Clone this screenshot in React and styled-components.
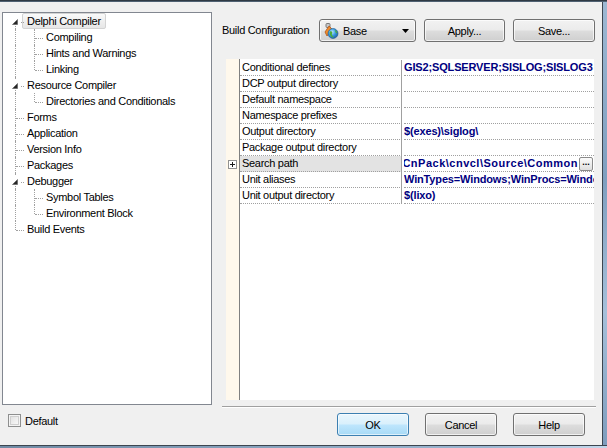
import React from 'react';
import styled, { createGlobalStyle, css } from 'styled-components';

const GlobalStyle = createGlobalStyle`
  html, body {
    margin: 0;
    padding: 0;
    background: #f0f0f0;
  }
  body {
    font-family: "Liberation Sans", Arial, sans-serif;
    font-size: 11px;
    color: #000;
  }
`;

const treeItems = [
  { label: 'Delphi Compiler', guides: ['expFirst'], selected: true },
  { label: 'Compiling', guides: ['pass', 'branch'] },
  { label: 'Hints and Warnings', guides: ['pass', 'branch'] },
  { label: 'Linking', guides: ['pass', 'last'] },
  { label: 'Resource Compiler', guides: ['exp'] },
  { label: 'Directories and Conditionals', guides: ['pass', 'last'] },
  { label: 'Forms', guides: ['branch'] },
  { label: 'Application', guides: ['branch'] },
  { label: 'Version Info', guides: ['branch'] },
  { label: 'Packages', guides: ['branch'] },
  { label: 'Debugger', guides: ['exp'] },
  { label: 'Symbol Tables', guides: ['pass', 'branch'] },
  { label: 'Environment Block', guides: ['pass', 'last'] },
  { label: 'Build Events', guides: ['last'] },
];

const options = [
  { name: 'Conditional defines', value: 'GIS2;SQLSERVER;SISLOG;SISLOG3' },
  { name: 'DCP output directory', value: '' },
  { name: 'Default namespace', value: '' },
  { name: 'Namespace prefixes', value: '' },
  { name: 'Output directory', value: '$(exes)\\siglog\\' },
  { name: 'Package output directory', value: '' },
  {
    name: 'Search path',
    value: '..\\Componentes\\CnPack\\cnvcl\\Source\\Common',
    expandable: true,
    active: true,
  },
  { name: 'Unit aliases', value: 'WinTypes=Windows;WinProcs=Windows;DbiTypes=BDE' },
  { name: 'Unit output directory', value: '$(lixo)' },
];

const Window = styled.div`
  width: 607px;
  height: 448px;
  display: flex;
  flex-direction: column;
  overflow: hidden;
`;

const TopFrame = styled.div`
  height: 2px;
  flex: none;
  background: linear-gradient(#1f262d, #5f7589);
`;

const Middle = styled.div`
  flex: 1;
  display: flex;
  min-height: 0;
`;

const SideFrame = styled.div`
  width: 4px;
  flex: none;
  border-left: 1px solid #3d4650;
  background: linear-gradient(#9db8d3, #7f9fbf 40%, #a6c0da 70%, #7e9dbd);
`;

const BottomFrame = styled.div`
  height: 2px;
  flex: none;
  border-top: 1px solid #3d4650;
  background: linear-gradient(to right, #6f8aa4, #9cb7d2 80%, #c4d8ec);
`;

const Content = styled.div`
  flex: 1;
  display: flex;
  flex-direction: column;
  padding: 10px 0 0 2px;
  background: #f0f0f0;
`;

const Main = styled.div`
  display: flex;
  height: 396px;
  flex: none;
`;

const Tree = styled.div`
  width: 208px;
  height: 391px;
  border: 1px solid #828790;
  background: #fff;
  flex: none;
`;

const TreeRow = styled.div`
  display: flex;
  align-items: center;
  height: 16px;
  padding-left: 2px;
  white-space: nowrap;
`;

const lineColor = '#a0a0a0';

const Guide = styled.span`
  position: relative;
  width: 19px;
  height: 16px;
  flex: none;

  &::before {
    content: '';
    position: absolute;
    left: 10px;
    border-left: 1px dotted ${lineColor};
    ${({ $kind }) =>
      $kind === 'pass' || $kind === 'branch'
        ? css`top: 0; bottom: 0;`
        : $kind === 'last'
        ? css`top: 0; height: 9px;`
        : $kind === 'expFirst'
        ? css`top: 13px; bottom: 0;`
        : $kind === 'exp'
        ? css`top: 0; bottom: 0; clip-path: polygon(0 0, 100% 0, 100% 3px, 0 3px, 0 13px, 100% 13px, 100% 100%, 0 100%);`
        : css`display: none;`}
  }

  &::after {
    content: '';
    position: absolute;
    top: 9px;
    border-top: 1px dotted ${lineColor};
    ${({ $kind }) =>
      $kind === 'branch' || $kind === 'last'
        ? css`left: 11px; width: 8px;`
        : $kind === 'exp' || $kind === 'expFirst'
        ? css`left: 16px; width: 3px;`
        : css`display: none;`}
  }
`;

const Triangle = styled.svg`
  position: absolute;
  left: 7px;
  top: 6px;
  width: 6px;
  height: 6px;
`;

const TreeLabel = styled.span`
  height: 14px;
  line-height: 14px;
  padding: 0 3px;
  margin-left: ${({ $selected }) => ($selected ? '-2px' : '0')};
  letter-spacing: -0.3px;
  ${({ $selected }) =>
    $selected &&
    css`
      padding: 0 4px 0 4px;
      border: 1px solid #d3d3d3;
      border-radius: 2px;
      background: linear-gradient(#fafafa, #e6e6e6);
    `}
`;

const RightPanel = styled.div`
  width: 374px;
  margin-left: 10px;
  display: flex;
  flex-direction: column;
`;

const Toolbar = styled.div`
  display: flex;
  align-items: center;
  margin-top: 7px;
  height: 23px;
`;

const ToolLabel = styled.span`
  width: 97px;
  flex: none;
  letter-spacing: -0.3px;
  margin-top: -1px;
`;

const buttonFace = css`
  border: 1px solid #707070;
  border-radius: 3px;
  background: linear-gradient(#f2f2f2 0%, #ebebeb 48%, #dddddd 52%, #cfcfcf 100%);
  box-shadow: inset 0 0 0 1px rgba(255, 255, 255, 0.7);
`;

const Combo = styled.div`
  ${buttonFace};
  box-sizing: border-box;
  width: 97px;
  height: 23px;
  display: flex;
  align-items: center;
  padding: 0 6px 0 3px;
  gap: 4px;
  flex: none;
`;

const ComboText = styled.span`
  flex: 1;
  letter-spacing: -0.3px;
`;

const Button = styled.button`
  ${buttonFace};
  box-sizing: border-box;
  width: ${({ $w }) => $w || 72}px;
  height: 23px;
  margin-left: ${({ $gap }) => ($gap == null ? 0 : $gap)}px;
  font-family: inherit;
  font-size: 11px;
  color: #000;
  letter-spacing: -0.3px;
  padding: 0;
  flex: none;
  ${({ $default }) =>
    $default &&
    css`
      border-color: #3c7fb1;
      background: linear-gradient(#eaf6fd 0%, #d9f0fc 48%, #bee6fd 52%, #a7d9f5 100%);
      box-shadow: inset 0 0 0 1px rgba(255, 255, 255, 0.6);
    `}
`;

const Grid = styled.div`
  margin: 17px 2px 0 4px;
  height: 340px;
  padding-top: 1px;
  background: linear-gradient(
    to right,
    #fff8ec 0,
    #fff8ec 13px,
    #808080 13px,
    #808080 14px,
    #fff 14px
  );
`;

const OptionRow = styled.div`
  display: flex;
  height: 16px;
`;

const GutterCell = styled.div`
  width: 14px;
  flex: none;
  display: flex;
  align-items: flex-start;
`;

const PlusBox = styled.span`
  box-sizing: border-box;
  width: 9px;
  height: 9px;
  margin: 4px 0 0 2px;
  border: 1px solid #919191;
  background: #fff;
  display: flex;
  align-items: center;
  justify-content: center;
`;

const NameCell = styled.div`
  box-sizing: border-box;
  width: 162px;
  flex: none;
  padding-left: 2px;
  line-height: 15px;
  border-right: 1px solid #a0a0a0;
  border-bottom: 1px dotted #a0a0a0;
  letter-spacing: -0.3px;
  white-space: nowrap;
  overflow: hidden;
  background: ${({ $active }) => ($active ? '#e3e3e3' : 'transparent')};
`;

const ValueCell = styled.div`
  flex: 1;
  min-width: 0;
  display: flex;
  align-items: center;
  margin-left: 2px;
  border-bottom: 1px dotted #a0a0a0;
  height: 15px;
`;

const ValueText = styled.span`
  flex: 1;
  min-width: 0;
  display: flex;
  justify-content: ${({ $right }) => ($right ? 'flex-end' : 'flex-start')};
  overflow: hidden;
  white-space: nowrap;
  font-weight: bold;
  color: #000080;
  letter-spacing: ${({ $right }) => ($right ? '0.5px' : '-0.15px')};
  line-height: 15px;
`;

const EllipsisButton = styled.span`
  box-sizing: border-box;
  width: 14px;
  height: 14px;
  margin: 0 1px 0 1px;
  flex: none;
  border: 1px solid #8a8a8a;
  border-radius: 2px;
  background: linear-gradient(#fbfbfb, #dedede);
  display: flex;
  align-items: center;
  justify-content: center;
  font-weight: bold;
  font-size: 9px;
  line-height: 6px;
  padding-bottom: 3px;
`;

const Separator = styled.div`
  margin-top: 6px;
  height: 0;
  border-top: 1px solid #a0a0a0;
  border-bottom: 1px solid #fff;
`;

const Footer = styled.div`
  display: flex;
  align-items: flex-start;
  padding-left: 6px;
`;

const CheckLabel = styled.label`
  display: flex;
  align-items: center;
  gap: 4px;
  margin-top: 6px;
  letter-spacing: -0.3px;
`;

const CheckBox = styled.span`
  box-sizing: border-box;
  width: 13px;
  height: 13px;
  border: 1px solid #8e8f8f;
  background: linear-gradient(135deg, #dcdcdc, #fefefe);
  box-shadow: inset 0 0 0 1px #f4f4f4, inset 0 0 0 2px #cfcfcf;
`;

const ButtonRow = styled.div`
  display: flex;
  margin: 5px 17px 0 auto;
`;

function ConfigIcon() {
  return (
    <svg width="16" height="16" viewBox="0 0 16 16">
      <defs>
        <radialGradient id="globe" cx="0.4" cy="0.35" r="0.7">
          <stop offset="0" stopColor="#bfe8ff" />
          <stop offset="0.5" stopColor="#3a9be0" />
          <stop offset="1" stopColor="#1b5c9e" />
        </radialGradient>
      </defs>
      <rect x="3" y="0.5" width="4" height="4" rx="1" fill="#c8c8c8" stroke="#7a7a7a" />
      <path d="M2 9 L6 3 L9 6 L4 13 Z" fill="#f08c2c" stroke="#b0561a" strokeWidth="0.8" />
      <circle cx="10" cy="10.5" r="5" fill="url(#globe)" stroke="#1d5a8e" strokeWidth="0.6" />
      <path d="M7 8.5 C8.5 7.5 10 9 9 10.5 C8 12 10 13 11 14.5 L8.5 14 C7 12.5 6 10 7 8.5 Z" fill="#4cae3a" />
      <path d="M12 7 C13.5 7.5 14.5 9 14 10.5 C12.8 10 12 8.5 12 7 Z" fill="#4cae3a" />
    </svg>
  );
}

function TreeItem({ item }) {
  return (
    <TreeRow>
      {item.guides.map((g, i) => (
        <Guide key={i} $kind={g}>
          {(g === 'exp' || g === 'expFirst') && (
            <Triangle viewBox="0 0 6 6">
              <polygon points="5.5,0.5 5.5,5.5 0.5,5.5" fill="#262626" stroke="#595959" strokeWidth="0.6" />
            </Triangle>
          )}
        </Guide>
      ))}
      <TreeLabel $selected={item.selected}>{item.label}</TreeLabel>
    </TreeRow>
  );
}

function OptionLine({ option }) {
  return (
    <OptionRow>
      <GutterCell>
        {option.expandable && (
          <PlusBox>
            <svg width="5" height="5" viewBox="0 0 5 5">
              <path d="M0 2.5 H5 M2.5 0 V5" stroke="#1a1a1a" strokeWidth="1" />
            </svg>
          </PlusBox>
        )}
      </GutterCell>
      <NameCell $active={option.active}>{option.name}</NameCell>
      <ValueCell>
        <ValueText $right={option.expandable}>{option.value}</ValueText>
        {option.expandable && <EllipsisButton>...</EllipsisButton>}
      </ValueCell>
    </OptionRow>
  );
}

export default function App() {
  return (
    <>
      <GlobalStyle />
      <Window>
        <TopFrame />
        <Middle>
          <Content>
            <Main>
              <Tree>
                {treeItems.map((item) => (
                  <TreeItem key={item.label} item={item} />
                ))}
              </Tree>
              <RightPanel>
                <Toolbar>
                  <ToolLabel>Build Configuration</ToolLabel>
                  <Combo>
                    <ConfigIcon />
                    <ComboText>Base</ComboText>
                    <svg width="7" height="4" viewBox="0 0 7 4">
                      <polygon points="0,0 7,0 3.5,4" fill="#000" />
                    </svg>
                  </Combo>
                  <Button $w={81} $gap={8}>Apply...</Button>
                  <Button $w={82} $gap={8}>Save...</Button>
                </Toolbar>
                <Grid>
                  {options.map((o) => (
                    <OptionLine key={o.name} option={o} />
                  ))}
                </Grid>
                <Separator />
              </RightPanel>
            </Main>
            <Footer>
              <CheckLabel>
                <CheckBox />
                Default
              </CheckLabel>
              <ButtonRow>
                <Button $default>OK</Button>
                <Button $gap={16}>Cancel</Button>
                <Button $gap={16}>Help</Button>
              </ButtonRow>
            </Footer>
          </Content>
          <SideFrame />
        </Middle>
        <BottomFrame />
      </Window>
    </>
  );
}
